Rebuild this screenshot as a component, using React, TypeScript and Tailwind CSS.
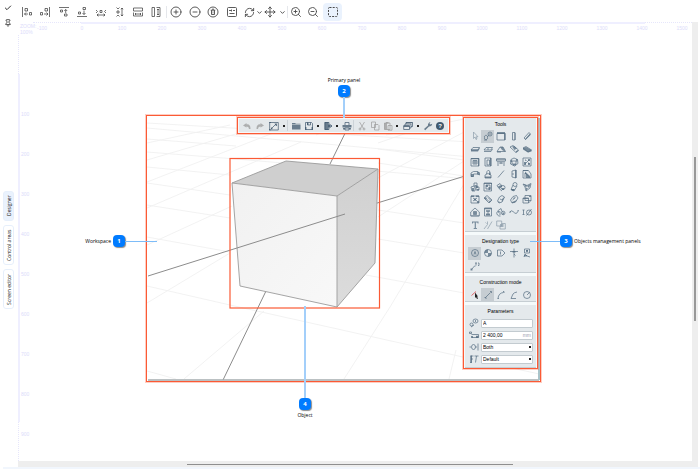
import React, { useState } from 'react';
import clsx from 'clsx';
import { Check, Pin, CirclePlus, CircleMinus, RefreshCw, Move, ZoomIn, ZoomOut, ChevronDown } from 'lucide-react';

type Glyph = { label: string; d?: string; f?: string; light?: boolean };

// All glyphs are drawn on a 10x10 grid: d is stroked, f is filled
const ALIGN_TOOLS: Glyph[] = [
  { label: 'Align left', d: 'M.5 0V10M3 1.500h2.500v2.500h-2.500zM7.500 5.500h2v2.500h-2zM2.500 7H6M4 5.500L2.500 7L4 8.500' },
  { label: 'Align right', d: 'M9.500 0V10M5 1.500h2.500v2.500h-2.500zM.5 5.500h2v2.500h-2zM4 7H8M6.500 5.500L8 7L6.500 8.500' },
  { label: 'Align top', d: 'M0 .5H10M1.500 3h2v2h-2zM5.500 7h2.500v2h-2.500zM6.700 6V2.500M5.300 4L6.700 2.500L8.200 4' },
  { label: 'Align bottom', d: 'M0 9.500H10M1.500 5h2v2h-2zM6 .5h2.500v2h-2.500zM7 3.500V7.500M5.500 6L7 7.500L8.500 6' },
  { label: 'Center horizontally', d: 'M4 3.500h2v2h-2zM0 3L1.500 4.500L0 6M10 3L8.500 4.500L10 6M1 8H9M2.500 6.800L1 8L2.500 9.200M7.500 6.800L9 8L7.500 9.200' },
  { label: 'Center vertically', d: 'M3 4h2v2h-2zM2.500 .5L4 2L5.500 .5M2.500 9.500L4 8L5.500 9.500M8 1V9M7 2.300L8 1L9 2.300M7 7.700L8 9L9 7.700' },
  { label: 'Same width', d: 'M.5 1h9v3h-9zM2 7H8M3 6L2 7L3 8M7 6L8 7L7 8M.5 5.500V9H9.500V5.500' },
  { label: 'Same height', d: 'M1 .5h2.500v9h-2.500zM5.500 .5H9V9.500H5.500M7 2V8M6 3L7 2L8 3M6 7L7 8L8 7' },
];

const DRAW_TOOLS: Glyph[] = [
  { label: 'Select', d: 'M3.500 1V7.500L5 6L6 8.500L7 8L6 5.800H8z', light: true },
  { label: 'Marker', d: 'M1.500 6.500a1.600 1.600 0 1 0 3 0a1.600 1.600 0 1 0 -3 0M5 3a2 2 0 1 0 4 0a2 2 0 1 0 -4 0M4.500 5.500L5.800 4.500M7 2V4M1 9H4' },
  { label: 'Wall', d: 'M1 2.500h8v6.500h-8z', f: 'M1 1h8v2h-8zM8 2h1.500v7H8z' },
  { label: 'Column', d: 'M3.500 1.500h2.500v7.500h-2.500z', f: 'M5.500 1.500L6.500 2V9H5.500z' },
  { label: 'Beam', d: 'M2 7L7 1.500L8.500 3L3.500 8.500z', f: 'M3 8L8 2.500L8.500 4L3.500 9z' },
  { label: 'Slab', d: 'M1 6L3 3.500H9.500L8 6z', f: 'M1 5.500H8L9.500 3.500V5L8 7.500H1z' },
  { label: 'Floor', d: 'M1 6L3 3.500H9.500L8 6zM1 7.500H8L9.500 5M4 5h2' },
  { label: 'Roof', d: 'M1 7.500L4 3H7L9.500 7.500z', f: 'M4 3H7L9.500 8L6 6zM1 7.500H5V8.500H1z' },
  { label: 'Shell', d: 'M1 3L4 1.500L9.500 6L7 8.500z', f: 'M3 2.500L5.500 2L8 4.500L5.500 6zM7 7L9.500 6V7L7 9z' },
  { label: 'Mesh', d: 'M1 4L4 2.500L9.500 6L6 8z', f: 'M1 4L4 3L9.500 6V7.500L6 8.500L1 5.500z' },
  { label: 'Window', d: 'M1 1.500h8v7.500h-8zM3 3.500h4v3.500h-4zM5 3.500V7M3 5H7', f: 'M1 1h8v1.200h-8zM8 2h1v7H8z' },
  { label: 'Door', d: 'M2 1h6v8h-6zM4 3h2.500v5h-2.500z', f: 'M7 1h1.300v8H7z' },
  { label: 'Curtain wall', d: 'M.5 2h9v2h-9zM2 4V9M4 4V7M6 4V7M8 4V9M4 6H6', f: 'M.5 1.500h9v1h-9z' },
  { label: 'Skylight', d: 'M2 2.500L5 1L8.500 2.500L9 6.500L5.500 9L1.500 7zM3 4h4v3h-4z', f: 'M1.500 3h1.500v2H1.500zM7 2h1.500v2.500H7zM4 7h3v1.500H4z' },
  { label: 'Opening', d: 'M1 1h8v8h-8zM3 7L7 3M3 3h1v1M6 6h1v1', f: 'M2 5h2v3H2zM6 2h2v2H6zM6 6h2v2H6z' },
  { label: 'Railing', d: 'M1 6V4L3.500 2.500H8L9.500 4.500V6L7.500 5H3.500V7.500H1z', f: 'M1 5h2.500v3H1zM7 3h2.500v2.500H7z' },
  { label: 'Lamp', d: 'M3.500 5L4 2.500L5.500 1L7 3V5.500M2 6L5 4.500L8 6V9H2z', f: 'M2 7.500h6V9H2zM6 3L7.500 4V6H6z' },
  { label: 'Line', d: 'M2 8.500L8 1.500' },
  { label: 'Opening side', d: 'M3 2L7 1V9L3 8zM3 5L5 5', f: 'M6 1h1.500v8H6z' },
  { label: 'Stair', d: 'M1 1.500h5.500L9 5V9H1zM3 8V4L7.500 8', f: 'M3 2.500L8 7V9H4V5H3zM1 1h5v1H1z' },
  { label: 'Object', d: 'M4 1h3v3h-3zM1 5L4 4L5 6V9H2zM6 5h3v3H6z', f: 'M2 6h2v3H2zM5 3L8 4V6H6zM7 7h2v1.500H7z' },
  { label: 'Zone', d: 'M1 1h7.500v8h-7.500zM3 3h4v4h-4z', f: 'M3 3h2v2H3zM5.500 5h2v3h-2zM1 1h8v1H1z' },
  { label: 'Morph', d: 'M1 3.500L4 1.500L6 4L3 6.500zM5 5.500a2 2 0 1 0 4 0a2 2 0 1 0 -4 0M3 6.500L6 9', f: 'M2 4.500L5 3L6 4L3 6.500zM6 6h2v2H6z' },
  { label: 'Duct', d: 'M4 2.500a2 2 0 1 0 4 0a2 2 0 1 0 -4 0M4 3L2 7.500L5 9L8 4M2 7.500h3', f: 'M2 7L6 7L5 9H3z' },
  { label: 'Truss', d: 'M1 2L5 3.500L9 1.500L8 6L4 9L3 5z', f: 'M2 2L5 3.500L4 6zM5 4L8.500 2L7 6zM4 6L6 6L4 9z' },
  { label: 'Detail', d: 'M1 2h8v7h-8zM3 4L7 7M7 4L3 7', f: 'M1 1.500h3v1.500H1zM6 1.500h3V3H6zM7 7h2v2H7zM4 4.500h2v2H4z' },
  { label: 'Patch', d: 'M1 4L4 1.500L9 6L6 9zM3 4.500L6 7.500M5 3.500L7.500 6', f: 'M1 4L3 3L4 5L2.500 5.500zM6 7L9 6L6.500 9z' },
  { label: 'Pipe', d: 'M3.500 3L6 1.500L8.500 3L6 8L3 9L1.500 7zM4 5L6 6', f: 'M6 5L8.500 3L6 8zM2 7L4 8L3 9z' },
  { label: 'Ring', d: 'M1.500 6L4 2.500L7.500 1.500L9 4L6.500 8L3 9zM3.500 6L6.500 3.500', f: 'M3 8L8 6L6 8.500L3 9zM4 4L6 3L5 5z' },
  { label: 'Boxes', d: 'M3 1.500h6v5H3zM1 4h5.500v5H1zM6.500 9L9 6.500', f: 'M1 4h5.500v1H1zM7 2h2v1H7z' },
  { label: 'Section', d: 'M.7 5L5 1L9.300 5V9H.7zM3.500 4.500h3v3h-3z', f: 'M4 5h2v2H4zM1 8.500h8v.8H1z' },
  { label: 'Elevation', d: 'M1.500 1h7v8h-7zM3 4h4M5 4V7M3 7h4', f: 'M1.500 1h7v1.300h-7zM3 7h4v1.500H3zM3 3.500h4v1H3z' },
  { label: 'Interior elevation', d: 'M1.500 4L5 1.500L6 4.500M1 5a3 3 0 0 0 3.500 4M5.500 6a1.700 1.700 0 1 0 3.500 0a1.700 1.700 0 1 0 -3.500 0M4 4.500V8', f: 'M1 4L4 4L2.500 6zM6.500 5.500h1.500v2H6.500z' },
  { label: 'Curve', d: 'M.7 5.500Q2 2.500 4 4.500T7 6.500T9.500 3.500M.5 5h1.500M8.500 3.500h1' },
  { label: 'Worksheet', d: 'M.5 3H2.500M1.500 3V7.500M.5 7.500H2.500M4.500 5.500a2.500 2.500 0 1 0 5 0a2.500 2.500 0 1 0 -5 0M4.500 8.500L9.500 2' },
  { label: 'Text', f: 'M2 1.500h6.500v2h-.8L7.300 2.500H5.900V8h1v1H3.700V8h1V2.500H3.200L2.800 3.500H2z' },
  { label: 'Label', d: 'M1 9L4.500 4.500V1.500M4.500 9L9 1.500M2.500 2.500L3.500 3.500', light: true },
  { label: 'Fill', d: 'M.7 1h5v5h-5zM5.500 3.500H9.300V9H4V6', f: 'M4 4h3.500v3H4z', light: true },
];

const DESIGNATIONS: Glyph[] = [
  { label: 'Circle mark', d: 'M1.500 5a3.500 3.500 0 1 0 7 0a3.500 3.500 0 1 0 -7 0M4 6.500L5 3.500L6 6.500' },
  { label: 'Quadrant mark', d: 'M1.500 5a3.500 3.500 0 1 0 7 0a3.500 3.500 0 1 0 -7 0', f: 'M5 5V1.500A3.500 3.500 0 0 0 1.500 5zM5 5V8.500A3.500 3.500 0 0 0 8.500 5z' },
  { label: 'Tag mark', d: 'M1.500 2H6L9 5L6 8H1.500zM4.500 3.500V6.500' },
  { label: 'Level mark', d: 'M5 .5V9.500M1 3.500H9M5 6L6.500 7.500', f: 'M3.500 3h3v1.500h-3z' },
  { label: 'Stamp', d: 'M2.500 1h5v4h-5zM4 2.500h2M2 9L3 6L5 8L8 9', f: 'M4 2h2v2H4zM2 7h3v1.500H2z' },
  { label: 'Leader', d: 'M1.500 8.500L4.500 5H5.500M5 2H7M6 2V4.500M8 2h1v2.500h-1', f: 'M.5 7.500h2v2h-2z' },
];

const MODES: Glyph[] = [
  { label: 'Pick', f: 'M6 2L7.500 5.500L6 8.500L4.500 5z' },
  { label: 'Segment', d: 'M2.500 7.500L7.500 2.500M1.500 7.500h1.500v1.500M7 1.500h1.500V3' },
  { label: 'Arc', d: 'M2 8.500Q2.500 3 7.500 2.500M1.500 8.500h1.500M7 1.500h1V3' },
  { label: 'Tangent arc', d: 'M2 8.500L4 4Q5 2.500 8 2M2 8.500H7' },
  { label: 'Circle', d: 'M1.500 5a3.500 3.500 0 1 0 7 0a3.500 3.500 0 1 0 -7 0M5 5L7.500 2.500' },
];

const PARAM_ICONS: Record<string, Glyph> = {
  name: { label: 'Name', d: 'M4 3a2.500 2 0 1 0 5 0a2.500 2 0 1 0 -5 0M1 6.500a1.500 1.500 0 1 0 3 0a1.500 1.500 0 1 0 -3 0M6.500 2V4M2 9L5 7' },
  width: { label: 'Width', d: 'M.5 2h2v1.500h-2zM2.500 4.500H9.500V7.500H3M8 5.500v2', f: 'M2 6h2v2H2zM7 6h2.500v2H7z' },
  side: { label: 'Side', d: 'M.5 5H2M2.500 5a2 2.500 0 1 0 4 0a2 2.500 0 1 0 -4 0M6.500 5H8M9 1.500V8.500' },
  font: { label: 'Font', d: 'M1.500 2H4.500M2 2V8.500M2 5H4M5.500 2H9.500M7.500 2L6.500 8.500M1 8.500H3', f: 'M1.500 1.500h1.500v7H1.500z' },
};

const RULER_X = Array.from({ length: 17 }, (_, i) => (i - 1) * 100);
const RULER_Y = Array.from({ length: 9 }, (_, i) => (i + 1) * 100);
const TABS = ['Designer', 'Control areas', 'Screen editor'];

const FRAME = 'border border-[#fb5a35] shadow-[0_0_0_1px_rgba(251,90,53,0.3)]';

function Icon({ glyph, className = 'text-[#536b80]' }: { glyph: Glyph; className?: string }) {
  return (
    <svg viewBox="0 0 10 10" className={clsx('size-[10px] shrink-0', className, glyph.light && 'opacity-60')} aria-hidden="true">
      {glyph.f && <path d={glyph.f} fill="currentColor" opacity="0.75" />}
      {glyph.d && <path d={glyph.d} fill="none" stroke="currentColor" strokeWidth="0.7" />}
    </svg>
  );
}

function BarButton({ label, active, children }: { label: string; active?: boolean; children: React.ReactNode }) {
  return (
    <button
      type="button"
      aria-label={label}
      className={clsx('flex h-[18px] items-center justify-center rounded-sm text-[#4a4a4a]', active ? 'w-[19px] bg-[#eaf2fd]' : 'w-[14px]')}
    >
      {children}
    </button>
  );
}

function TopToolbar() {
  return (
    <div className="flex h-[22px] items-center pl-[2px] pt-[2px]">
      <div className="flex w-[143px] justify-between">
        {ALIGN_TOOLS.map(t => (
          <BarButton key={t.label} label={t.label}>
            <Icon glyph={t} className="text-[#333333]" />
          </BarButton>
        ))}
      </div>
      <span className="ml-[3px] mr-[2px] h-3 w-px bg-gray-200" />
      <div className="flex w-[70px] justify-between">
        <BarButton label="Add"><CirclePlus size={12} strokeWidth={1.8} /></BarButton>
        <BarButton label="Remove"><CircleMinus size={12} strokeWidth={1.8} /></BarButton>
        <BarButton label="Delete">
          <svg viewBox="0 0 12 12" className="size-3" fill="none" stroke="currentColor" strokeWidth="0.9">
            <circle cx="6" cy="6" r="5" />
            <path d="M3.700 4.200H8.300M4.500 4.200V8.500H7.500V4.200M5 3.200H7" />
            <path d="M6 5.300V7.500" strokeWidth="0.6" />
          </svg>
        </BarButton>
        <BarButton label="Properties">
          <svg viewBox="0 0 12 12" className="size-3" fill="none" stroke="currentColor" strokeWidth="0.9">
            <rect x="1.500" y="1.500" width="9" height="9" rx="1" />
            <path d="M3 4.500H5M7 4.500H9M3.500 7.500H8.500" />
            <path d="M5.500 3.500V5.500" />
          </svg>
        </BarButton>
      </div>
      <div className="ml-[3px] flex items-center">
        <BarButton label="Rotate"><RefreshCw size={11} strokeWidth={2} /></BarButton>
        <ChevronDown size={7} strokeWidth={3} color="#444444" />
      </div>
      <div className="flex items-center gap-[2px]">
        <BarButton label="Move"><Move size={12} strokeWidth={1.8} /></BarButton>
        <ChevronDown size={7} strokeWidth={3} color="#444444" />
      </div>
      <span className="mx-px h-3 w-px bg-gray-200" />
      <div className="flex items-center gap-[3px]">
        <BarButton label="Zoom in"><ZoomIn size={12} strokeWidth={1.8} /></BarButton>
        <BarButton label="Zoom out"><ZoomOut size={12} strokeWidth={1.8} /></BarButton>
        <BarButton label="Frame" active>
          <svg viewBox="0 0 12 12" className="size-3" fill="none" stroke="currentColor" strokeWidth="1">
            <rect x="1.500" y="1.500" width="9" height="9" rx="1" strokeDasharray="2 1.200" />
          </svg>
        </BarButton>
      </div>
    </div>
  );
}

function SideRail() {
  const [tab, setTab] = useState('Designer');
  return (
    <aside className="flex w-[18px] shrink-0 flex-col pl-[3px]">
      <div className="flex h-[191px] flex-col items-center gap-[7px] pr-[5px] pt-1 text-[#333333]">
        <button type="button" aria-label="Apply"><Check size={8} strokeWidth={3} /></button>
        <button type="button" aria-label="Pin"><Pin size={8} strokeWidth={2.5} /></button>
      </div>
      <nav className="flex flex-col gap-1">
        {TABS.map(name => (
          <button
            key={name}
            type="button"
            onClick={() => setTab(name)}
            className={clsx(
              "flex w-[11px] rotate-180 items-center justify-center rounded-[3px] border border-[#e6effb] font-['Open_Sans',sans-serif] text-[5px] leading-[8px] text-[#111111] [writing-mode:vertical-rl]",
              name === 'Designer' ? 'h-[30px]' : 'h-10',
              tab === name && 'bg-[#eaf2fd]'
            )}
          >
            {name}
          </button>
        ))}
      </nav>
    </aside>
  );
}

function Scene() {
  return (
    <svg viewBox="0 0 393 265" className="absolute inset-0 size-full" fill="none" aria-hidden="true">
      <g transform="translate(-1 -1)">
        <path
          stroke="#f0f0f0"
          strokeWidth="0.9"
          d="M1 8L392 31M1 13L392 48M1 24L90 31M1 37L90 44L393 70M1 52L84 60M1 68L84 80M1 90L84 103M1 122L84 137M1 171L84 190L393 259M1 256L30 264M232 34L318 45M232 48L318 61M232 95L318 108M232 124L318 138M220 160L318 178
          M1 28L84 10M1 45L110 13M1 67L135 15M1 93L155 27M1 130L86 91M1 188L84 138M38 264L118 196M198 264L244 192L318 69M232 102L318 46M232 63L318 17M170 20L205 4M232 28L290 8M240 20L318 4M303 264L310 235"
        />
        <path stroke="#8c8c8c" d="M207 2L184 49M120 176L77 265M228 89L319 61" />
        <path fill="#cfcfcf" d="M86 68L140 46L232 54L191 81z" />
        <path fill="url(#front)" d="M86 68L191 81V192L94 171z" />
        <path fill="url(#side)" d="M191 81L232 54L229 148L191 192z" />
        <path stroke="#9b9b9b" strokeWidth="0.9" d="M86 68L140 46L232 54L191 81zM86 68L94 171L191 192V81M191 192L229 148L232 54" />
        <path stroke="#8c8c8c" d="M2 161L199 99" />
        <rect x="84" y="43.500" width="149.500" height="149.500" stroke="#fb5a35" strokeWidth="1.200" />
        <path stroke="#a5adaf" strokeWidth="1.500" d="M2 265H393" />
        <path stroke="#a9c4ca" strokeWidth="2" d="M393 3V265" />
      </g>
      <defs>
        <linearGradient id="front" x1="0" y1="0" x2="1" y2="1">
          <stop stopColor="#f1f1f1" />
          <stop offset="1" stopColor="#f8f8f8" />
        </linearGradient>
        <linearGradient id="side" x1="0" y1="0" x2="0" y2="1">
          <stop stopColor="#d0d0d0" />
          <stop offset="1" stopColor="#dcdcdc" />
        </linearGradient>
      </defs>
    </svg>
  );
}

const PRIMARY: { glyph: Glyph; menu?: boolean; dim?: boolean; end?: boolean; wide?: boolean }[] = [
  { glyph: { label: 'Undo', f: 'M1 4.500L4.500 2V6.500zM4 3.500Q8.500 2.500 8.500 8H7Q7 5 4 5.500z' }, dim: true },
  { glyph: { label: 'Redo', f: 'M9 4.500L5.500 2V6.500zM6 3.500Q1.500 2.500 1.500 8H3Q3 5 6 5.500z' }, dim: true },
  { glyph: { label: 'Marquee', d: 'M.7 1.500h8.600v7.500H.7zM2 8L7 3', f: 'M2 6L4 8L2 8.500zM5.500 2.500h2.500v2.500H7zM0 1h2v1H0zM0 8h1.500v1.500H0z' }, menu: true, end: true, wide: true },
  { glyph: { label: 'Open', f: 'M1 2H4L5 2.800H9.500V3.500H1zM1 4H9.500V8.500H1z' } },
  { glyph: { label: 'Save', d: 'M1.500 1.500H7.500L8.500 2.500V8.500H1.500zM3.500 1.500V4H6.500V1.500', f: 'M1 6h1.500v3H1zM7.500 6H9v3H7.500zM3 1.500h1.500V4H3z' }, menu: true },
  { glyph: { label: 'Export', d: 'M2 1.500H6V8.500H2zM5 5H9M7.500 3.500L9 5L7.500 6.500', f: 'M1.500 1h4v2.500h2v3h-2V9h-4z' }, menu: true },
  { glyph: { label: 'Print', d: 'M3 4V1.500H7V4M3 7H7V9H3z', f: 'M.5 4h9v2.500h-9zM1 7h2v1.500H1zM7 7h2v1.500H7z' }, end: true },
  { glyph: { label: 'Cut', d: 'M2.500 1L6.500 7.500M7.500 1L3.500 7.500M2 8a1 1 0 1 0 2 0a1 1 0 1 0 -2 0M6 8a1 1 0 1 0 2 0a1 1 0 1 0 -2 0' }, dim: true },
  { glyph: { label: 'Copy', d: 'M1.500 1H5.500V6.500H1.500zM4.500 3.500H8L9 4.500V9H4.500z' }, dim: true },
  { glyph: { label: 'Paste', d: 'M1.500 2H7V8.500H1.500zM5 4.500H9V9.200H5z', f: 'M1.500 2h2.500v6.500H1.500zM3 1h2.500v1.500H3z' }, menu: true, dim: true },
  { glyph: { label: 'Layers', d: 'M3 3V1.500H9.500V5.500H8M2 4.500V3H8V7H6.500M.7 4.700H6.500V8.500H.7z', f: 'M.7 4.500H6.500V6H.7zM3 1.200H9.500V2.200H3z' }, menu: true, wide: true },
  { glyph: { label: 'Settings', f: 'M1 8L5 4.500Q4.500 2 7.500 1L6.500 2.500L7.500 3.500L9.200 2.800Q9 5.500 6 5.500L2.200 9.200z' } },
];

function PrimaryPanel() {
  return (
    <div className={clsx('relative h-[17px] w-[213px] shrink-0 bg-[#f6f8f9] p-px', FRAME)}>
      <div className="flex h-[13px] items-center bg-[#e4e8eb] pl-px">
        {PRIMARY.map(({ glyph, menu, dim, end, wide }) => (
          <React.Fragment key={glyph.label}>
            <button type="button" aria-label={glyph.label} className={clsx('flex shrink-0 justify-center', wide ? 'w-[15px]' : 'w-[13px]')}>
              <Icon glyph={glyph} className={dim ? 'text-[#9b9b9b]' : 'text-[#40586e]'} />
            </button>
            {menu && <span className="mx-[2px] size-[2px] shrink-0 bg-[#222222]" />}
            {end && <span className="mr-px h-[11px] w-px shrink-0 bg-[#cdd3d8]" />}
          </React.Fragment>
        ))}
        <button type="button" aria-label="Help" className="ml-[2px] flex size-2 shrink-0 items-center justify-center rounded-full bg-[#40586e] text-[6px] font-bold leading-none text-white">
          ?
        </button>
      </div>
    </div>
  );
}

function Panel({ title, children }: { title: string; children: React.ReactNode }) {
  return (
    <section className="border-b border-[#c6ced3] bg-[#e4e9ec] px-px">
      <h2 className="flex h-3 items-center justify-center text-[5px] leading-none text-black">{title}</h2>
      {children}
    </section>
  );
}

function IconGrid({ items, className, initial }: { items: Glyph[]; className: string; initial: string }) {
  const [active, setActive] = useState(initial);
  return (
    <div className={clsx('grid grid-cols-5 px-[2px]', className)}>
      {items.map(item => (
        <button
          key={item.label}
          type="button"
          aria-label={item.label}
          onClick={() => setActive(item.label)}
          className={clsx('flex items-center justify-center', active === item.label && 'bg-[#c6cdd2]')}
        >
          {item.label === 'Pick' ? (
            <svg viewBox="0 0 10 10" className="size-[10px]" aria-hidden="true">
              <path d="M1.500 5.500L6 1.500" stroke="#e0474c" strokeWidth="0.8" />
              <path d="M5 2.500V8L6 7L7 9L8 8.500L7 6.500H8z" fill="#222222" />
            </svg>
          ) : (
            <Icon glyph={item} />
          )}
        </button>
      ))}
    </div>
  );
}

const FIELD = 'h-[9px] w-full min-w-0 appearance-none rounded-[1px] border border-[#c3cbd0] bg-white px-px text-[5px] leading-[7px] text-black outline-none';

function ParamRow({ id, children }: { id: string; children: React.ReactNode }) {
  const glyph = PARAM_ICONS[id];
  return (
    <div className="flex h-3 items-center gap-[2px] pl-[3px] pr-[2px]">
      <label htmlFor={id} aria-label={glyph.label}><Icon glyph={glyph} /></label>
      <div className="relative flex flex-1 items-center">{children}</div>
    </div>
  );
}

function Arrow() {
  return <span className="pointer-events-none absolute right-[2px] size-[2px] bg-[#222222]" />;
}

function ManagementPanels() {
  return (
    <div className={clsx('relative flex w-[75px] shrink-0 flex-col gap-[3px] bg-[#f5fafb] px-px', FRAME)}>
      <Panel title="Tools">
        <IconGrid items={DRAW_TOOLS} className="h-[101px] grid-rows-8" initial="Marker" />
      </Panel>
      <Panel title="Designation type">
        <IconGrid items={DESIGNATIONS} className="h-[25px] grid-rows-2" initial="Circle mark" />
      </Panel>
      <Panel title="Construction mode">
        <IconGrid items={MODES} className="h-[13px]" initial="Segment" />
      </Panel>
      <Panel title="Parameters">
        <div className="pb-[2px]">
          <ParamRow id="name">
            <input id="name" type="text" defaultValue="A" className={FIELD} />
          </ParamRow>
          <ParamRow id="width">
            <input id="width" type="text" defaultValue="2 400,00" className={FIELD} />
            <span className="absolute right-[2px] text-[5px] leading-none text-gray-400">mm</span>
          </ParamRow>
          <ParamRow id="side">
            <select id="side" className={FIELD}><option>Both</option><option>Left</option></select>
            <Arrow />
          </ParamRow>
          <ParamRow id="font">
            <select id="font" className={FIELD}><option>Default</option><option>Custom</option></select>
            <Arrow />
          </ParamRow>
        </div>
      </Panel>
    </div>
  );
}

function Badge({ n }: { n: number }) {
  return (
    <span className="flex size-3 shrink-0 items-center justify-center rounded-[4px] bg-[#007bff] text-[6px] font-bold leading-none text-white shadow-[1px_1px_1px_rgba(0,0,0,0.45)]">
      {n}
    </span>
  );
}

// Numbered pins with leader lines, placed against the workspace frame
function Callouts() {
  return (
    <div className="font-['Open_Sans',sans-serif] text-[5px] leading-[8px] text-black">
      <div className="absolute right-[383px] top-[119px] flex items-center whitespace-nowrap">
        <span className="pr-[2px]">Workspace</span>
        <Badge n={1} />
        <span className="h-px w-8 bg-[#7dbcf8]" />
      </div>
      <div className="absolute left-[172px] top-[-40px] flex w-[50px] flex-col items-center whitespace-nowrap">
        <span className="pb-px">Primary panel</span>
        <Badge n={2} />
        <span className="h-[21px] w-[2px] bg-[#a3cffa]" />
      </div>
      <div className="absolute left-[383px] top-[119px] flex items-center whitespace-nowrap">
        <span className="h-px w-[30px] bg-[#7dbcf8]" />
        <Badge n={3} />
        <span className="pl-[2px]">Objects management panels</span>
      </div>
      <div className="absolute left-[133px] top-[190px] flex w-[50px] flex-col items-center whitespace-nowrap">
        <span className="h-[92px] w-[2px] bg-[#a3cffa]" />
        <Badge n={4} />
        <span className="pt-px">Object</span>
      </div>
    </div>
  );
}

function Rulers() {
  return (
    <div className="absolute inset-0 overflow-hidden text-[5px] leading-[6px] text-[#dcdcfa]">
      <div className="absolute left-0 right-0 top-0 flex h-[2px] pl-[15px]">
        <span className="w-12 border-t border-dotted border-[#e6e6fb]" />
        <span className="w-[564px] bg-[#efefff]" />
        <span className="flex-1 border-t border-dotted border-[#e6e6fb]" />
      </div>
      <div className="absolute bottom-0 left-0 top-0 flex w-[2px] flex-col pt-[13px]">
        <span className="h-[39px] border-l border-dotted border-[#e6e6fb]" />
        <span className="h-[348px] bg-[#efefff]" />
        <span className="flex-1 border-l border-dotted border-[#e6e6fb]" />
      </div>
      <div className="absolute left-[2px] top-[1px]">ZOOM:<br />100%</div>
      <div className="absolute left-1 top-[3px] flex">
        {RULER_X.map(v => <span key={v} className="w-10 shrink-0 text-center">{v}</span>)}
      </div>
      <div className="absolute left-[3px] top-[72px] flex flex-col">
        {RULER_Y.map(v => <span key={v} className="flex h-10 items-center">{v}</span>)}
      </div>
    </div>
  );
}

export default function App() {
  return (
    <div className="flex h-screen w-full flex-col overflow-hidden bg-white font-['Liberation_Sans',Arial,sans-serif]">
      <div className="flex min-h-0 flex-1">
        <SideRail />
        <main className="flex min-w-0 flex-1 flex-col">
          <TopToolbar />
          <div className="flex min-h-0 flex-1 pr-[2px]">
            <div className="flex min-w-0 flex-1 flex-col">
              {/* Canvas */}
              <div className="relative min-h-0 flex-1 pl-[128px] pt-[93px]">
                <Rulers />
                <div className={clsx('relative h-[267px] w-[395px] bg-white', FRAME)}>
                  <Scene />
                  <div className="flex items-start justify-end gap-[13px] pr-[2px] pt-px">
                    <PrimaryPanel />
                    <ManagementPanels />
                  </div>
                  <Callouts />
                </div>
              </div>
              <div className="flex h-[6px] items-center bg-[#eeeeee] pl-[169px]">
                <span className="h-px w-[326px] bg-[#8f8f8f]" />
              </div>
            </div>
            <div className="flex w-[6px] justify-center bg-[#eeeeee] pt-[135px]">
              <span className="h-[164px] w-[2px] bg-[#999999]" />
            </div>
          </div>
        </main>
      </div>
      <div className="ml-[3px] h-[2px] bg-[#f1f6fd]" />
    </div>
  );
}
